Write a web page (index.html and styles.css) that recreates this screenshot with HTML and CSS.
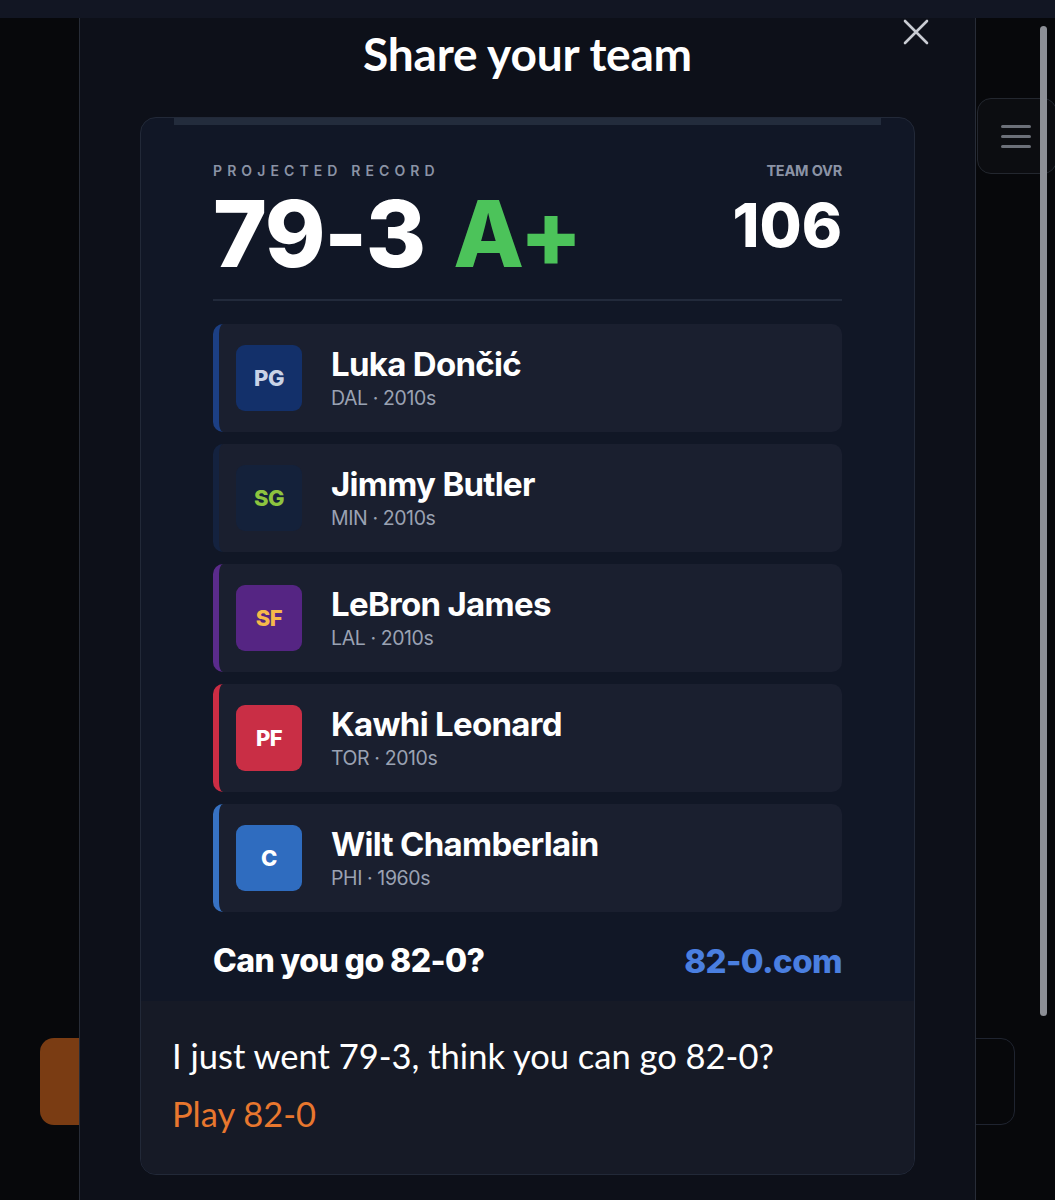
FILE: index.html
```html
<!DOCTYPE html>
<html lang="en">
<head>
    <meta charset="UTF-8">
    <meta name="viewport" content="width=device-width, initial-scale=1.0">
    <title>Share your team</title>
    <link rel="stylesheet" href="styles.css">
</head>
<body>
    <div class="topbar"></div>
    <div class="page">
        <div class="menu-btn">
            <span></span><span></span><span></span>
        </div>
        <div class="play-btn"></div>
        <div class="ghost-btn"></div>
        <div class="scrollbar"></div>
    </div>

    <div class="modal">
        <button class="close-btn" aria-label="Close">
            <svg width="26" height="26" viewBox="0 0 26 26"><path d="M2 2L24 24M24 2L2 24" stroke="#c9ccd3" stroke-width="2.6" stroke-linecap="round"/></svg>
        </button>
        <h2 class="modal-title">Share your team</h2>

        <div class="share-card">
            <div class="share-image">
                <div class="image-top"></div>
                <div class="record-head">
                    <div class="record">
                        <div class="label spaced">PROJECTED RECORD</div>
                        <div class="record-value">79-3 <span class="grade">A+</span></div>
                    </div>
                    <div class="ovr">
                        <div class="label">TEAM OVR</div>
                        <div class="ovr-value">106</div>
                    </div>
                </div>
                <div class="divider"></div>

                <div class="players">
                    <div class="player pg">
                        <div class="pos">PG</div>
                        <div class="info">
                            <div class="name">Luka Dončić</div>
                            <div class="meta">DAL · 2010s</div>
                        </div>
                    </div>
                    <div class="player sg">
                        <div class="pos">SG</div>
                        <div class="info">
                            <div class="name">Jimmy Butler</div>
                            <div class="meta">MIN · 2010s</div>
                        </div>
                    </div>
                    <div class="player sf">
                        <div class="pos">SF</div>
                        <div class="info">
                            <div class="name">LeBron James</div>
                            <div class="meta">LAL · 2010s</div>
                        </div>
                    </div>
                    <div class="player pf">
                        <div class="pos">PF</div>
                        <div class="info">
                            <div class="name">Kawhi Leonard</div>
                            <div class="meta">TOR · 2010s</div>
                        </div>
                    </div>
                    <div class="player c">
                        <div class="pos">C</div>
                        <div class="info">
                            <div class="name">Wilt Chamberlain</div>
                            <div class="meta">PHI · 1960s</div>
                        </div>
                    </div>
                </div>

                <div class="card-foot">
                    <span class="challenge">Can you go 82-0?</span>
                    <span class="site">82-0.com</span>
                </div>
            </div>
            <div class="share-text">
                <p class="message">I just went 79-3, think you can go 82-0?</p>
                <a class="play-link" href="#">Play 82-0</a>
            </div>
        </div>
    </div>
</body>
</html>
```

FILE: styles.css
```css
:root {
    --page-bg: #07080b;
    --topbar-bg: #121623;
    --modal-bg: #0d1019;
    --modal-border: #272c37;
    --card-bg: #111726;
    --card-bottom: #161a26;
    --row-bg: #1a1f2f;
    --muted: #8b93a5;
    --meta: #9aa2b3;
    --green: #4cc35a;
    --blue: #4a7fe0;
    --orange: #e8772e;
}

body {
    margin: 0;
    height: 1200px;
    overflow: hidden;
    background: var(--page-bg);
    font-family: 'Inter', 'Liberation Sans', sans-serif;
    color: #fff;
}

.topbar {
    height: 18px;
    background: var(--topbar-bg);
}

.page {
    position: relative;
    height: 1182px;
}

.menu-btn {
    position: absolute;
    left: 977px;
    top: 80px;
    width: 80px;
    height: 76px;
    box-sizing: border-box;
    border: 1.5px solid #23272f;
    border-radius: 14px;
    background: #0c0d11;
    display: flex;
    flex-direction: column;
    justify-content: center;
    gap: 7px;
    padding-left: 23px;
}

.menu-btn span {
    display: block;
    width: 30px;
    height: 3px;
    border-radius: 2px;
    background: #6c7079;
}

.play-btn {
    position: absolute;
    left: 40px;
    top: 1020px;
    width: 80px;
    height: 87px;
    border-radius: 14px;
    background: #7a3c13;
}

.ghost-btn {
    position: absolute;
    left: 930px;
    top: 1020px;
    width: 85px;
    height: 87px;
    box-sizing: border-box;
    border: 1.5px solid #1f2430;
    border-radius: 14px;
}

.scrollbar {
    position: absolute;
    left: 1040px;
    top: 8px;
    width: 7px;
    height: 990px;
    border-radius: 4px;
    background: #8c8f96;
}

/* modal sheet */
.modal {
    position: absolute;
    left: 79px;
    top: 18px;
    width: 897px;
    height: 1182px;
    box-sizing: border-box;
    background: var(--modal-bg);
    border-left: 1.5px solid var(--modal-border);
    border-right: 1.5px solid var(--modal-border);
    padding: 0 60px;
}

.close-btn {
    position: absolute;
    right: 46px;
    top: 1px;
    background: none;
    border: none;
    padding: 0;
    cursor: pointer;
}

.modal-title {
    margin: 0;
    padding-top: 11px;
    height: 99px;
    box-sizing: border-box;
    text-align: center;
    font-family: 'Lato', sans-serif;
    font-weight: 700;
    font-size: 46px;
    letter-spacing: -0.2px;
    line-height: 50px;
}

.share-card {
    border: 1.5px solid #222938;
    border-radius: 16px;
    overflow: hidden;
    background: var(--card-bg);
}

.share-image {
    padding: 0 72px 20px;
}

.image-top {
    height: 7px;
    margin: 0 -39px;
    background: #232c3c;
}

.record-head {
    display: flex;
    justify-content: space-between;
    align-items: flex-start;
    padding-top: 33.5px;
}

.label {
    font-size: 14.5px;
    font-weight: 700;
    color: var(--muted);
    letter-spacing: -0.2px;
    line-height: 24px;
}

.label.spaced {
    font-size: 14px;
    letter-spacing: 5.1px;
    font-weight: 600;
}

.record-value {
    font-size: 92px;
    font-weight: 800;
    letter-spacing: -1.5px;
    line-height: 80px;
    margin-top: 11px;
}

.grade {
    color: var(--green);
    margin-left: 10px;
}

.ovr {
    text-align: right;
}

.ovr-value {
    font-size: 61px;
    font-weight: 800;
    letter-spacing: 0;
    line-height: 66px;
    margin-top: 9px;
}

.divider {
    height: 2px;
    background: #222a3b;
    margin-top: 25px;
    margin-bottom: 23px;
}

.players {
    display: flex;
    flex-direction: column;
    gap: 12px;
}

.player {
    height: 108px;
    box-sizing: border-box;
    display: flex;
    align-items: center;
    gap: 29px;
    padding-left: 17px;
    background: var(--row-bg);
    border-radius: 10px;
    border-left: 6px solid;
}

.pos {
    width: 66px;
    height: 66px;
    border-radius: 9px;
    display: flex;
    align-items: center;
    justify-content: center;
    font-size: 22px;
    font-weight: 800;
    letter-spacing: -0.5px;
}

.name {
    font-size: 33px;
    font-weight: 700;
    letter-spacing: -0.7px;
    line-height: 38px;
}

.meta {
    font-size: 19.5px;
    color: var(--meta);
    letter-spacing: -0.4px;
    line-height: 26px;
    margin-top: 2px;
}

.pg { border-left-color: #1c3f84; }
.pg .pos { background: #13306a; color: #c9d3e7; }
.sg { border-left-color: #14223f; }
.sg .pos { background: #14213a; color: #8dc43f; }
.sf { border-left-color: #5a2b8c; }
.sf .pos { background: #552583; color: #f6b94a; }
.pf { border-left-color: #cc2d44; }
.pf .pos { background: #c92e45; color: #fff; }
.c { border-left-color: #3772c4; }
.c .pos { background: #2f6cbf; color: #fff; }

.card-foot {
    display: flex;
    justify-content: space-between;
    align-items: center;
    margin-top: 29px;
    line-height: 40px;
}

.challenge {
    font-size: 32px;
    font-weight: 800;
    letter-spacing: -0.6px;
}

.site {
    font-size: 33px;
    font-weight: 800;
    letter-spacing: -0.6px;
    color: var(--blue);
}

.share-text {
    background: var(--card-bottom);
    padding: 35px 31px 40px;
    font-family: 'Lato', sans-serif;
}

.message {
    margin: 0;
    font-size: 34.5px;
    line-height: 40px;
}

.play-link {
    display: inline-block;
    margin-top: 18px;
    font-size: 34.5px;
    line-height: 40px;
    color: var(--orange);
    text-decoration: none;
}
```
